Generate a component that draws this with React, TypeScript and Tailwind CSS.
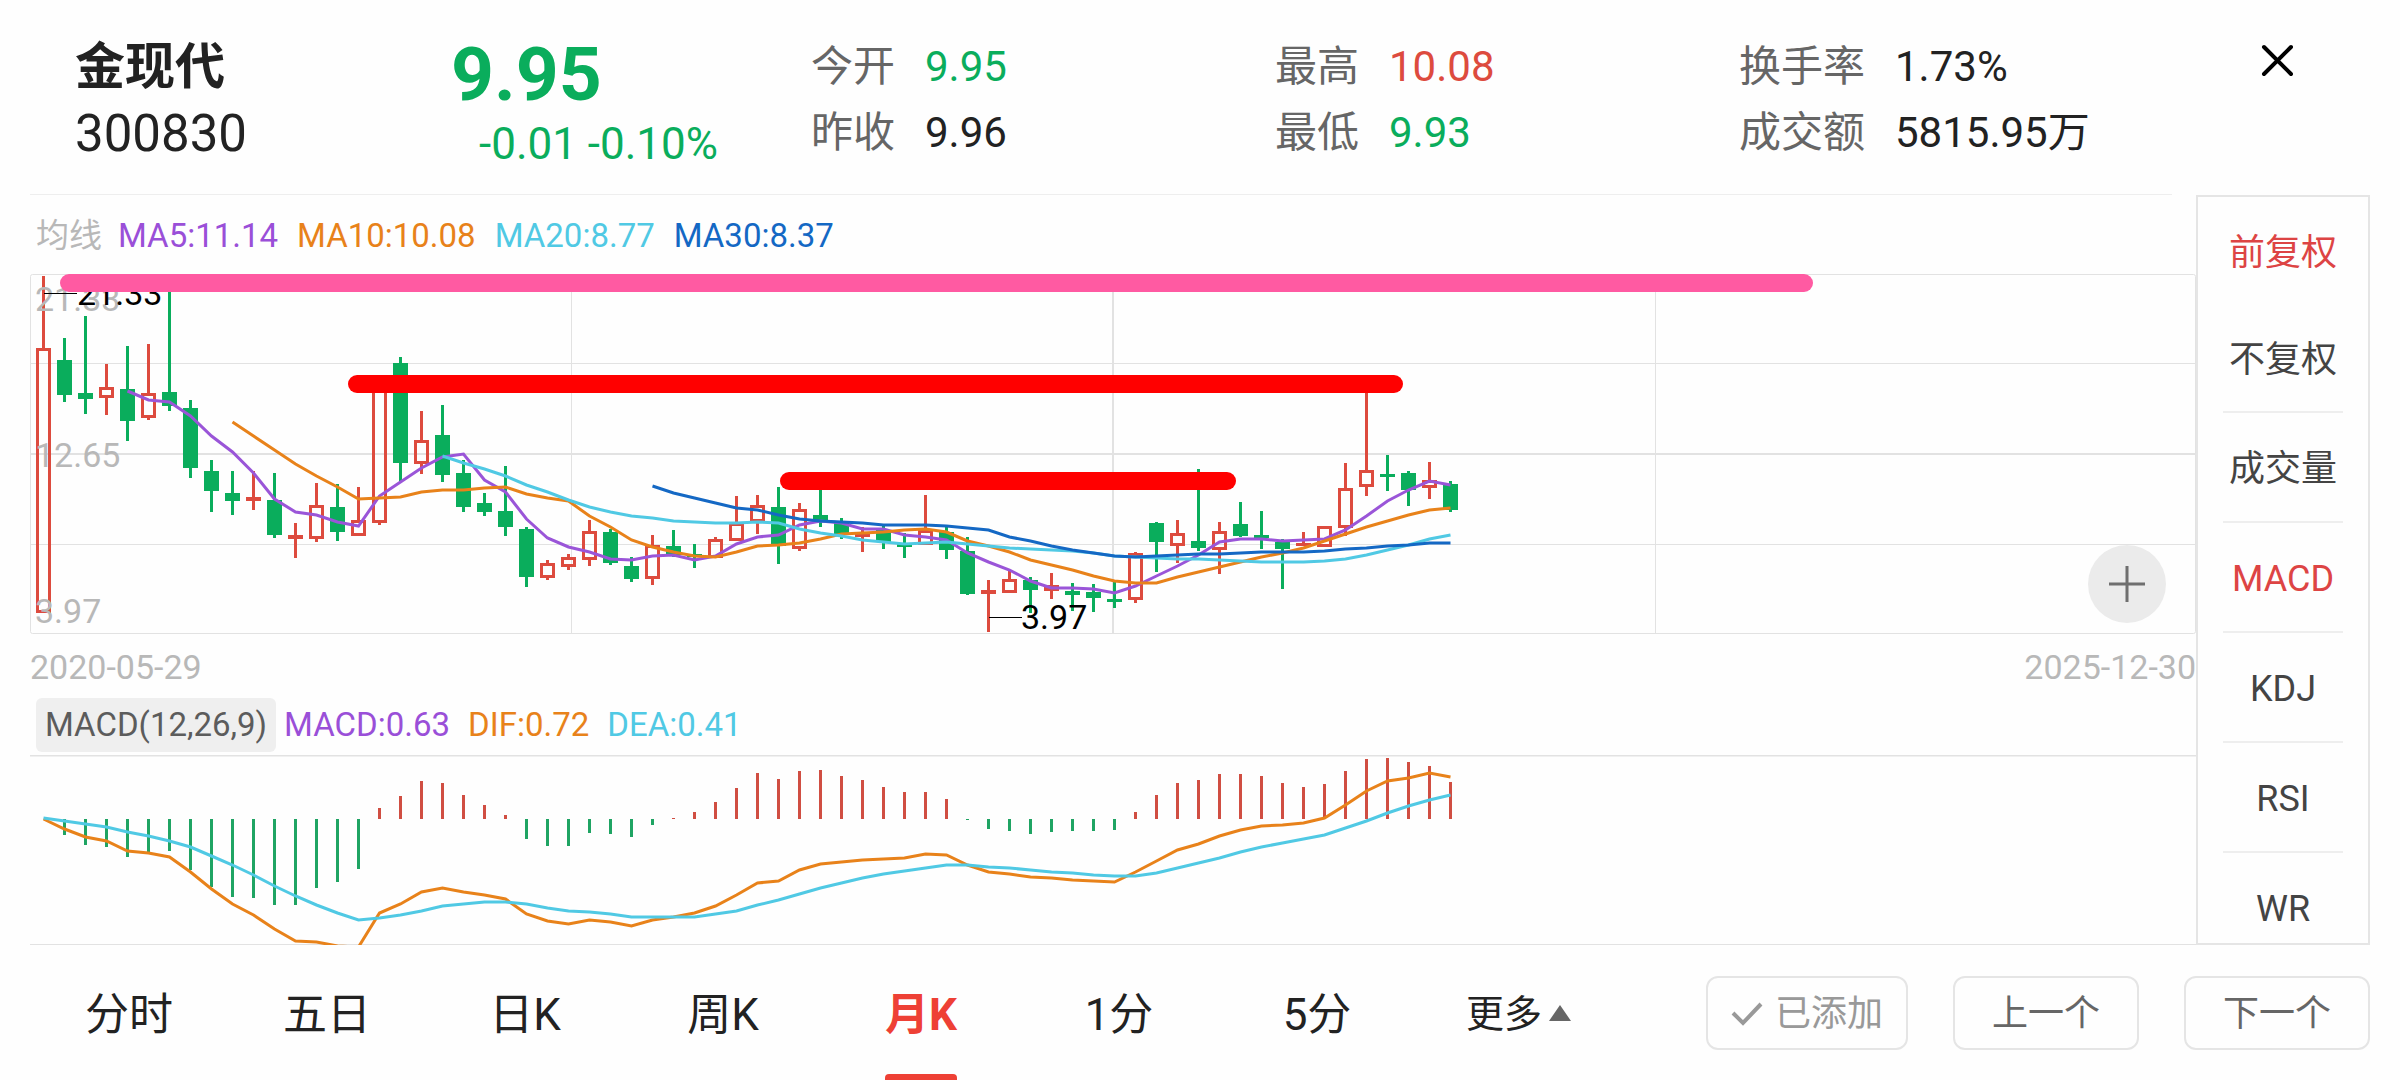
import { useState } from 'react';
import { clsx } from 'clsx';

const UP = '#dd4b3e';
const DOWN = '#0aad5c';
const GRID = '#e2e2e2';
const STEP = 21;
const FIRST_X = 13.5;

const CHART_WIDTH = 2166;
const PRICE_HEIGHT = 360;
const MACD_HEIGHT = 190;
const MACD_ZERO = 64;

type Candle = [dir: 'u' | 'd', high: number, top: number, bottom: number, low: number];

// Monthly candles in chart units, oldest first
const CANDLES: Candle[] = [
  ['u', 2, 74, 339, 339], ['d', 64, 86, 121, 128], ['d', 42, 119, 125, 140], ['u', 90, 113, 124, 141],
  ['d', 72, 115, 147, 167], ['u', 70, 119, 144, 146], ['d', 13, 118, 132, 137], ['d', 126, 134, 194, 204],
  ['d', 186, 197, 217, 238], ['d', 197, 219, 227, 241], ['u', 197, 223, 227, 236], ['d', 199, 226, 261, 264],
  ['u', 249, 261, 265, 284], ['u', 209, 231, 265, 268], ['d', 210, 233, 258, 267], ['u', 213, 246, 262, 262],
  ['u', 109, 109, 249, 251], ['d', 83, 89, 189, 207], ['u', 137, 166, 190, 200], ['d', 131, 161, 201, 208],
  ['d', 186, 199, 233, 238], ['d', 219, 229, 238, 242], ['d', 192, 237, 253, 262], ['d', 253, 255, 303, 313],
  ['u', 286, 289, 304, 306], ['u', 280, 283, 293, 296], ['u', 246, 257, 286, 292], ['d', 255, 258, 289, 291],
  ['d', 283, 292, 305, 308], ['u', 261, 271, 305, 311], ['d', 256, 272, 281, 283], ['d', 270, 280, 283, 294],
  ['u', 263, 265, 284, 284], ['u', 222, 249, 267, 267], ['u', 221, 231, 248, 260], ['d', 213, 233, 272, 290],
  ['u', 229, 235, 275, 277], ['d', 212, 241, 248, 253], ['d', 244, 247, 260, 265], ['u', 253, 260, 263, 278],
  ['d', 251, 256, 268, 275], ['d', 259, 270, 273, 284], ['u', 221, 256, 271, 271], ['d', 253, 258, 276, 285],
  ['d', 263, 277, 320, 321], ['u', 306, 316, 320, 358], ['u', 296, 305, 319, 319], ['d', 303, 306, 316, 339],
  ['u', 299, 311, 317, 325], ['d', 309, 317, 321, 337], ['d', 310, 318, 324, 338], ['d', 308, 325, 328, 334],
  ['u', 278, 279, 326, 329], ['d', 248, 249, 268, 298], ['u', 246, 259, 272, 289], ['d', 195, 267, 274, 277],
  ['u', 248, 257, 276, 300], ['d', 228, 250, 262, 263], ['d', 237, 261, 264, 275], ['d', 265, 268, 275, 315],
  ['u', 258, 269, 272, 272], ['u', 252, 252, 273, 273], ['u', 189, 214, 254, 262], ['u', 112, 196, 213, 222],
  ['d', 181, 200, 203, 217], ['d', 197, 199, 216, 232], ['u', 188, 206, 214, 225], ['d', 207, 210, 236, 238],
];

const AVERAGES = [
  {
    name: 'MA5:11.14',
    color: '#9a55d8',
    textClass: 'text-[#9a4fd8]',
    start: 4,
    values: [
      117, 126, 128, 142, 162, 178, 199, 225, 238, 241, 248, 252, 222, 208, 194, 183, 180, 206, 218, 245, 264, 273,
      278, 285, 286, 282, 281, 286, 282, 270, 263, 261, 251, 247, 249, 255, 255, 261, 263, 266, 279, 288, 296, 307,
      314, 314, 315, 319, 312, 302, 292, 281, 268, 265, 265, 267, 266, 265, 256, 242, 227, 216, 207, 211,
    ],
  },
  {
    name: 'MA10:10.08',
    color: '#e8821a',
    textClass: 'text-[#e8821a]',
    start: 9,
    values: [
      148, 162, 176, 190, 202, 213, 225, 224, 223, 218, 216, 216, 214, 213, 220, 224, 227, 242, 253, 266, 273, 278,
      282, 283, 278, 272, 271, 269, 265, 260, 259, 258, 256, 255, 258, 267, 272, 278, 286, 291, 296, 302, 307, 309,
      309, 303, 298, 293, 288, 283, 279, 274, 267, 260, 253, 247, 241, 236, 234,
    ],
  },
  {
    name: 'MA20:8.77',
    color: '#50c9e4',
    textClass: 'text-[#50c9e4]',
    start: 19,
    values: [
      182, 189, 195, 202, 211, 218, 226, 233, 238, 242, 244, 247, 248, 249, 249, 248, 249, 255, 259, 262, 266, 268,
      270, 269, 268, 270, 272, 274, 275, 276, 277, 279, 282, 283, 284, 285, 285, 286, 287, 288, 288, 288, 287, 285,
      281, 276, 271, 265, 261,
    ],
  },
  {
    name: 'MA30:8.37',
    color: '#1468c4',
    textClass: 'text-[#1468c4]',
    start: 29,
    values: [
      212, 219, 224, 229, 234, 236, 241, 245, 247, 248, 249, 251, 251, 251, 252, 254, 256, 263, 267, 272, 276, 279,
      282, 283, 282, 281, 280, 280, 279, 278, 278, 278, 277, 275, 274, 272, 271, 269, 269,
    ],
  },
];

const MACD_BARS = [
  64, 80, 90, 92, 102, 98, 96, 115, 132, 142, 143, 150, 150, 133, 127, 114, 53, 41, 26, 28, 40, 50, 60, 84, 91, 91, 78,
  79, 82, 70, 63, 57, 47, 33, 18, 24, 16, 15, 21, 25, 32, 37, 37, 44, 65, 74, 76, 79, 77, 76, 76, 75, 57, 40, 28, 25,
  19, 19, 21, 28, 32, 29, 16, 4, 3, 7, 11, 27,
];

const DIF = [
  64, 74, 82, 86, 96, 98, 102, 117, 134, 149, 160, 174, 186, 187, 191, 192, 158, 149, 137, 133, 137, 140, 144, 159,
  166, 169, 165, 167, 171, 165, 162, 158, 151, 140, 128, 126, 115, 109, 107, 105, 104, 103, 99, 100, 110, 117, 119,
  122, 123, 125, 126, 127, 117, 106, 95, 89, 81, 75, 71, 70, 68, 63, 50, 36, 26, 23, 18, 22,
];

const DEA = [
  63, 66, 69, 72, 77, 81, 86, 92, 101, 110, 120, 131, 141, 150, 158, 165, 163, 160, 156, 151, 149, 147, 147, 149, 153,
  156, 157, 159, 162, 162, 162, 162, 159, 156, 150, 145, 139, 133, 128, 123, 119, 116, 113, 110, 110, 112, 113, 115,
  117, 118, 120, 121, 121, 118, 113, 108, 103, 97, 92, 88, 84, 80, 73, 66, 58, 51, 45, 40,
];

const STATS = [
  [
    { label: '今开', value: '9.95', tone: 'text-[#0aad5c]' },
    { label: '昨收', value: '9.96', tone: 'text-[#222222]' },
  ],
  [
    { label: '最高', value: '10.08', tone: 'text-[#dd4b3e]' },
    { label: '最低', value: '9.93', tone: 'text-[#0aad5c]' },
  ],
  [
    { label: '换手率', value: '1.73%', tone: 'text-[#222222]' },
    { label: '成交额', value: '5815.95万', tone: 'text-[#222222]' },
  ],
];

const ADJUSTMENTS = ['前复权', '不复权'];
const INDICATORS = ['成交量', 'MACD', 'KDJ', 'RSI', 'WR'];
const PERIODS = ['分时', '五日', '日K', '周K', '月K', '1分', '5分'];

function xAt(index: number) {
  return FIRST_X + index * STEP;
}

function toPoints(values: number[], start = 0) {
  return values.map((y, i) => `${xAt(start + i)},${y}`).join(' ');
}

function Line({ values, start, color }: { values: number[]; start?: number; color: string }) {
  return <polyline points={toPoints(values, start)} fill="none" stroke={color} strokeWidth={3} />;
}

function CandleShape({ candle, index }: { candle: Candle; index: number }) {
  const [dir, high, top, bottom, low] = candle;
  const x = xAt(index);
  const color = dir === 'u' ? UP : DOWN;
  const height = bottom - top;

  return (
    <g>
      <rect x={x - 1.5} y={high} width={3} height={top - high} fill={color} />
      <rect x={x - 1.5} y={bottom} width={3} height={low - bottom} fill={color} />
      {dir === 'u' && height > 6 ? (
        <rect x={x - 6} y={top + 1.5} width={12} height={height - 3} fill="none" stroke={color} strokeWidth={3} />
      ) : (
        <rect x={x - 7.5} y={top} width={15} height={height} fill={color} />
      )}
    </g>
  );
}

function PriceChart() {
  return (
    <svg
      viewBox={`0 0 ${CHART_WIDTH} ${PRICE_HEIGHT}`}
      className="block h-auto w-full overflow-visible"
      role="img"
      aria-label="月K"
    >
      <g fill="none" stroke={GRID}>
        <rect x={0.5} y={0.5} width={CHART_WIDTH - 1} height={PRICE_HEIGHT - 1} rx={2} />
        <path d="M0 89.5H2166M0 270.5H2166M541.5 0V360M1625.5 0V360" />
        <path d="M0 180H2166M1083 0V360" strokeWidth={2} />
      </g>

      {CANDLES.map((candle, i) => (
        <CandleShape key={i} candle={candle} index={i} />
      ))}
      {AVERAGES.map((ma) => (
        <Line key={ma.name} values={ma.values} start={ma.start} color={ma.color} />
      ))}

      <g fill="#b8b8b8" fontSize={34}>
        <text x={5} y={37}>21.33</text>
        <text x={5} y={193}>12.65</text>
        <text x={5} y={349}>3.97</text>
      </g>
      <g fill="#000000" fontSize={34}>
        <path d="M14 19.5H47M959 343.5H992" stroke="#000000" />
        <text x={47} y={31}>21.33</text>
        <text x={991} y={355}>3.97</text>
      </g>

      {/* Hand-drawn resistance levels */}
      <rect x={30} y={0} width={1753} height={18} rx={9} fill="#ff5aa2" />
      <rect x={318} y={101} width={1055} height={18} rx={9} fill="#ff0000" />
      <rect x={750} y={198} width={456} height={18} rx={9} fill="#ff0000" />
    </svg>
  );
}

function MacdChart() {
  return (
    <svg viewBox={`0 0 ${CHART_WIDTH} ${MACD_HEIGHT}`} className="block h-auto w-full" role="img" aria-label="MACD">
      <path d="M0 0H2166" stroke={GRID} strokeWidth={3} />
      <path d="M0 189.5H2166" stroke={GRID} />
      {MACD_BARS.map((y, i) => (
        <rect
          key={i}
          x={xAt(i) - 1.5}
          y={Math.min(y, MACD_ZERO)}
          width={3}
          height={Math.abs(y - MACD_ZERO)}
          fill={y < MACD_ZERO ? '#d04e42' : '#1fa463'}
        />
      ))}
      <Line values={DIF} color="#e8821a" />
      <Line values={DEA} color="#50c9e4" />
    </svg>
  );
}

function QuoteHeader() {
  return (
    <header>
      <div className="grid h-[194px] grid-cols-[376fr_360fr_464fr_464fr_519fr_142fr] pt-[34px] pl-[75px]">
        <div className="text-[#222222]">
          <h1 className="text-[50px] leading-[66px] font-bold">金现代</h1>
          <p className="text-[51px] leading-[68px]">300830</p>
        </div>
        <div className="text-[#0aad5c]">
          <p className="text-[75px] leading-[80px] font-bold">9.95</p>
          <p className="pl-7 text-[44px] leading-[60px] whitespace-nowrap">-0.01 -0.10%</p>
        </div>
        {STATS.map((column) => (
          <dl key={column[0].label} className="text-[42px] leading-[66px] whitespace-nowrap">
            {column.map((stat) => (
              <div key={stat.label} className="flex gap-[30px]">
                <dt className="text-[#666666]">{stat.label}</dt>
                <dd className={stat.tone}>{stat.value}</dd>
              </div>
            ))}
          </dl>
        ))}
        <button type="button" aria-label="关闭" className="mt-2 h-10 w-10 self-start">
          <svg viewBox="0 0 40 40" className="h-10 w-10" fill="none" stroke="#000000" strokeWidth={4}>
            <path d="M6 5L33 32M33 5L6 32" strokeLinecap="round" />
          </svg>
        </button>
      </div>
      <div className="mr-[228px] ml-[30px] h-px bg-[#eeeeee]" />
    </header>
  );
}

function IndicatorPanel() {
  const [adjustment, setAdjustment] = useState('前复权');
  const [indicator, setIndicator] = useState('MACD');

  return (
    <aside className="mr-[30px] w-[174px] shrink-0 overflow-y-auto border-2 border-[#e5e5e5] text-[36px] text-[#444444] [contain:size] [scrollbar-width:none]">
      {ADJUSTMENTS.map((name) => (
        <button
          key={name}
          type="button"
          onClick={() => setAdjustment(name)}
          className={clsx('block h-[107px] w-full pt-1', adjustment === name && 'text-[#dd4444]')}
        >
          {name}
        </button>
      ))}
      {INDICATORS.map((name) => (
        <div key={name} className="px-[25px]">
          <div className="h-0.5 bg-[#eeeeee]" />
          <button
            type="button"
            onClick={() => setIndicator(name)}
            className={clsx('block h-[108px] w-full pt-1 whitespace-nowrap', indicator === name && 'text-[#dd4444]')}
          >
            {name}
          </button>
        </div>
      ))}
    </aside>
  );
}

function PeriodBar() {
  const [period, setPeriod] = useState('月K');

  return (
    <footer className="flex h-[135px] items-center justify-between pr-[30px] pl-[30px]">
      <nav className="grid h-full w-[1584px] grid-cols-8 text-[44px] text-[#222222]">
        {PERIODS.map((name) => (
          <button
            key={name}
            type="button"
            onClick={() => setPeriod(name)}
            className={clsx('relative pt-1', period === name && 'font-bold text-[#ee4035]')}
          >
            {name}
            {period === name && (
              <span className="absolute bottom-0 left-1/2 h-1.5 w-[72px] -translate-x-1/2 rounded-t-sm bg-[#ee4035]" />
            )}
          </button>
        ))}
        <button type="button" className="flex items-center justify-center gap-1.5 pt-1 pl-2 text-[38px]">
          更多
          <svg viewBox="0 0 24 22" className="h-[22px] w-6" fill="#666666">
            <path d="M12 1L23 17H1Z" />
          </svg>
        </button>
      </nav>
      <div className="flex gap-[45px] text-[36px] text-[#666666]">
        <button
          type="button"
          className="flex h-[74px] w-[202px] items-center justify-center gap-3 rounded-xl border-2 border-[#e5e5e5] pt-0.5 text-[#999999]"
        >
          <svg viewBox="0 0 32 26" className="h-[26px] w-8" fill="none" stroke="#999999" strokeWidth={4}>
            <path d="M2 12L12 22L30 3" />
          </svg>
          已添加
        </button>
        <button type="button" className="h-[74px] w-[186px] rounded-xl border-2 border-[#e5e5e5] pt-0.5">
          上一个
        </button>
        <button type="button" className="h-[74px] w-[186px] rounded-xl border-2 border-[#e5e5e5] pt-0.5">
          下一个
        </button>
      </div>
    </footer>
  );
}

export default function App() {
  return (
    <div className="min-h-screen bg-[#fefefe] font-[Roboto,'Noto_Sans_CJK_SC',sans-serif]">
      <QuoteHeader />

      <main className="flex pl-[30px]">
        <div className="min-w-0 flex-1">
          <div className="flex h-[79px] items-center gap-4 pt-[3px] pl-[6px] text-[33px] leading-10">
            <span className="text-[#b8b8b8]">均线</span>
            <div className="flex gap-[19px]">
              {AVERAGES.map((ma) => (
                <span key={ma.name} className={ma.textClass}>
                  {ma.name}
                </span>
              ))}
            </div>
          </div>

          <div className="relative">
            <PriceChart />
            <button
              type="button"
              aria-label="放大"
              className="absolute right-[30px] bottom-[11px] flex h-[78px] w-[78px] items-center justify-center rounded-full bg-[#ebebeb]"
            >
              <svg viewBox="0 0 36 36" className="h-9 w-9" stroke="#6f6f6f" strokeWidth={3}>
                <path d="M0 18H36M18 0V36" />
              </svg>
            </button>
          </div>

          <div className="flex h-16 items-center justify-between pt-[3px] text-[34px] text-[#b8b8b8]">
            <time>2020-05-29</time>
            <time>2025-12-30</time>
          </div>

          <div className="flex h-[57px] items-start gap-[18px] pl-[6px] text-[33px] leading-[54px]">
            <button type="button" className="-mr-[10px] rounded-md bg-[#efefef] px-[9px] text-[#5c5c5c]">
              MACD(12,26,9)
            </button>
            <span className="text-[#9a4fd8]">MACD:0.63</span>
            <span className="text-[#e8821a]">DIF:0.72</span>
            <span className="text-[#50c9e4]">DEA:0.41</span>
          </div>
          <MacdChart />
        </div>
        <IndicatorPanel />
      </main>

      <PeriodBar />
    </div>
  );
}
